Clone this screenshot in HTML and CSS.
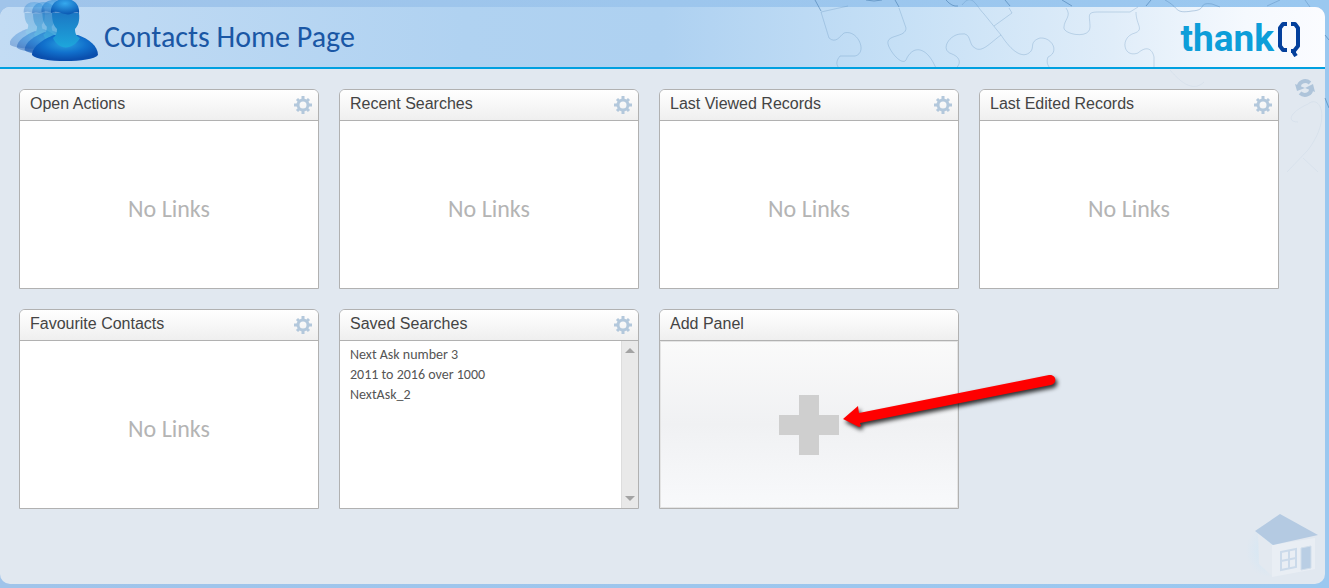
FILE: index.html
```html
<!DOCTYPE html>
<html lang="en">
<head>
<meta charset="utf-8">
<title>Contacts Home Page</title>
<link rel="stylesheet" href="styles.css">
</head>
<body>
<svg width="0" height="0" class="defs" aria-hidden="true">
  <symbol id="gear" viewBox="0 0 18 18">
    <g stroke="#b3c8dc" stroke-width="3">
      <path d="M9 0v4M9 14v4M0 9h4M14 9h4M3 3l3 3M12 12l3 3M15 3l-3 3M6 12l-3 3"/>
    </g>
    <circle cx="9" cy="9" r="5" fill="none" stroke="#b3c8dc" stroke-width="3"/>
  </symbol>
</svg>
<div class="frame">
  <header class="header">
    <svg class="people" width="90" height="62" viewBox="0 0 90 62" aria-hidden="true">
      <defs>
        <radialGradient id="body" cx=".5" cy=".35" r=".6"><stop offset="0" stop-color="#2aa0e0"/><stop offset=".55" stop-color="#1170cc"/><stop offset="1" stop-color="#0a4fae"/></radialGradient>
        <linearGradient id="face" x1="0" y1="0" x2="0" y2="1"><stop offset="0" stop-color="#1b78c4"/><stop offset="1" stop-color="#1da6dc"/></linearGradient>
        <radialGradient id="hair" cx=".5" cy=".3" r=".7"><stop offset="0" stop-color="#35a9ee"/><stop offset="1" stop-color="#0a58b2"/></radialGradient>
        <g id="person">
          <path d="M22 55C22 46 34 39 44 35H68C79 39 88 46 88 55C82 63 29 63 22 55Z" fill="url(#body)"/>
          <path d="M42 13C42 22 44 26 47 29C47 33 46 36 43 38C49 51 63 50 70 38C66 36 65 33 65 29C68 26 70 21 69 13Z" fill="url(#face)"/>
          <path d="M41 13C39 -6 71 -6 69 13C63 11 61 16 55 14C50 13 47 10 41 13Z" fill="url(#hair)"/>
        </g>
      </defs>
      <g opacity=".3"><use href="#person" transform="translate(-17 3) scale(.75)"/></g>
      <g opacity=".4"><use href="#person" transform="translate(-11 3) scale(.81)"/></g>
      <g opacity=".55"><use href="#person" transform="translate(-5 1) scale(.89)"/></g>
      <use href="#person"/>
    </svg>
    <h1 class="title">Contacts Home Page</h1>
    <div class="logo" role="img" aria-label="thankQ">
      <span class="logo-word">thank</span>
      <svg width="24" height="36" viewBox="0 0 24 36" fill="none" stroke="#04409c" stroke-width="4" stroke-linejoin="round">
        <path d="M10 3H6L3 7V25L6 29H10M14 3H18L21 7V25L17 30V32L19 35M14 30H19"/>
      </svg>
    </div>
  </header>
  <main class="content">
    <div class="panels">
      <section class="panel">
        <div class="panel-head"><h2>Open Actions</h2><button class="icon" aria-label="Open Actions settings"><svg width="18" height="18"><use href="#gear"/></svg></button></div>
        <p class="empty">No Links</p>
      </section>
      <section class="panel">
        <div class="panel-head"><h2>Recent Searches</h2><button class="icon" aria-label="Recent Searches settings"><svg width="18" height="18"><use href="#gear"/></svg></button></div>
        <p class="empty">No Links</p>
      </section>
      <section class="panel">
        <div class="panel-head"><h2>Last Viewed Records</h2><button class="icon" aria-label="Last Viewed Records settings"><svg width="18" height="18"><use href="#gear"/></svg></button></div>
        <p class="empty">No Links</p>
      </section>
      <section class="panel">
        <div class="panel-head"><h2>Last Edited Records</h2><button class="icon" aria-label="Last Edited Records settings"><svg width="18" height="18"><use href="#gear"/></svg></button></div>
        <p class="empty">No Links</p>
      </section>
      <section class="panel">
        <div class="panel-head"><h2>Favourite Contacts</h2><button class="icon" aria-label="Favourite Contacts settings"><svg width="18" height="18"><use href="#gear"/></svg></button></div>
        <p class="empty">No Links</p>
      </section>
      <section class="panel">
        <div class="panel-head"><h2>Saved Searches</h2><button class="icon" aria-label="Saved Searches settings"><svg width="18" height="18"><use href="#gear"/></svg></button></div>
        <div class="list-body">
          <ul class="links">
            <li><a href="#">Next Ask number 3</a></li>
            <li><a href="#">2011 to 2016 over 1000</a></li>
            <li><a href="#">NextAsk_2</a></li>
          </ul>
          <div class="track" aria-hidden="true">
            <svg width="10" height="5"><path d="M0 5L5 0L10 5Z" fill="#a3a3a3"/></svg>
            <svg width="10" height="5"><path d="M0 0L5 5L10 0Z" fill="#a3a3a3"/></svg>
          </div>
        </div>
      </section>
      <section class="panel add-panel">
        <div class="panel-head"><h2>Add Panel</h2></div>
        <button class="add" aria-label="Add Panel"><svg width="60" height="60"><path d="M20 0H40V20H60V40H40V60H20V40H0V20H20Z" fill="#cfcfcf"/></svg></button>
        <svg class="arrow" width="230" height="70" viewBox="0 0 230 70" aria-hidden="true">
          <path d="M3 49L18 36L19 43L209 5C216 4 218 13 211 15L20 53L21 56L19 57Z" fill="#f00"/>
        </svg>
      </section>
    </div>
    <button class="icon refresh" aria-label="Refresh">
      <svg width="20" height="18" viewBox="0 0 20 18" fill="none" stroke="#aec4da" stroke-width="4">
        <path d="M4 9C3 3 10 0 15 4M16 9C17 15 10 18 5 14"/>
        <path d="M0 5L2 12L10 9ZM20 13L18 5L10 9Z" fill="#aec4da" stroke="none"/>
      </svg>
    </button>
  </main>
  <svg class="house" width="76" height="70" viewBox="0 0 76 70" aria-hidden="true">
    <defs><radialGradient id="glow"><stop offset="0" stop-color="#d3e7f5"/><stop offset="1" stop-color="#d3e7f5" stop-opacity="0"/></radialGradient></defs>
    <ellipse cx="22" cy="40" rx="22" ry="26" fill="url(#glow)"/>
    <path d="M12 22L26 34V65L13 53Z" fill="#e3e9f0"/>
    <path d="M26 34L69 27V58L26 66Z" fill="#e9eef4"/>
    <path d="M9 20L34 3L72 24L27 34Z" fill="#b4cae2"/>
    <path d="M55 37L65 35V57L55 59Z" fill="#b9cee4" stroke="#d1deeb"/>
    <path d="M35 41L50 38V56L35 59ZM43 39V58M35 50L50 47" fill="none" stroke="#cbdaea" stroke-width="2"/>
  </svg>
</div>
<svg class="puzzle" width="529" height="190" viewBox="0 0 529 190" fill="none" stroke="#4a7fb0" aria-hidden="true">
  <path d="M9 0L15 11M89 0L93 7M60 0Q68 2 76 0M140 0Q146 7 152 6M199 0L204 6M256 0L266 6M340 6L345 0" transform="translate(6 0)" opacity=".6"/>
  <path d="M15 12L42 6M15 12L23 38C30 44 34 36 38 33C52 29 62 53 49 56L34 56C29 62 31 66 33 68M93 8L100 28C100 38 80 34 82 44C84 52 96 66 100 60C106 46 118 46 127 62L130 68M156 5C166 -8 170 6 178 14L195 35C184 43 176 53 169 48C162 45 166 32 155 34C144 34 133 50 146 54C156 58 154 65 150 68M195 35C206 52 216 58 223 53C230 48 222 42 234 38C246 37 254 52 242 57C240 62 242 66 244 68M188 26L206 13L203 8M260 8C266 16 258 20 258 27C256 34 284 40 284 27C284 16 280 12 292 12H324L332 7M330 12C330 26 340 30 326 34C314 40 318 58 332 53C340 46 346 48 348 57L348 68" transform="translate(6 0)" opacity=".25"/>
  <path d="M365 0C380 8 374 14 392 11C408 10 397 2 412 4L420 7M467 6L480 0M505 0L510 7" opacity=".35"/>
  <path d="M370 70C382 84 394 92 404 82M487 172L508 150C532 118 520 94 508 104C490 112 486 122 498 122M503 158L518 172" opacity=".06"/>
  <path d="M525 35L529 40M525 98L529 108" opacity=".6"/>
</svg>
</body>
</html>
```
FILE: styles.css
```css
* { box-sizing: border-box; }

body {
  margin: 0;
  min-height: 100vh;
  padding: 7px 4px 4px 0;
  display: flex;
  background: linear-gradient(90deg, #a0c4ea, #9ac8f0);
  font-family: "Liberation Sans", Arial, sans-serif;
  color: #444;
}

.defs { position: absolute; }

h1, h2, p, ul { margin: 0; padding: 0; font-weight: normal; }

button { border: 0; padding: 0; background: none; cursor: pointer; }

svg { display: block; }

.frame {
  position: relative;
  flex: 1;
  display: flex;
  flex-direction: column;
  border-radius: 10px;
  background: #e1e8f0;
}

.header {
  display: flex;
  align-items: center;
  height: 62px;
  padding: 0 24px 0 104px;
  border-bottom: 2px solid #00a0e0;
  border-radius: 10px 10px 0 0;
  background: linear-gradient(90deg, #c3dcf4 0%, #b0d2f1 35%, #aed1f1 50%, #c6e0f6 68%, #e0edf9 84%, #f5f9fe 94%, #fbfcff 100%);
}

.people {
  position: absolute;
  left: 10px;
  top: -7px;
}

.title {
  flex: 1;
  font: 30px/36px Carlito, Calibri, "Open Sans", sans-serif;
  color: #1a57a5;
}

.logo {
  display: flex;
  align-items: center;
  gap: 3px;
  padding-top: 4px;
}

.logo-word {
  font: bold 37px/40px Roboto, sans-serif;
  color: #0d9ed9;
}

.content {
  flex: 1;
  display: flex;
  align-items: flex-start;
  padding: 20px 10px 20px 19px;
}

.panels {
  flex: 1;
  display: grid;
  grid-template-columns: repeat(auto-fill, 300px);
  gap: 20px;
}

.panel {
  display: flex;
  flex-direction: column;
  min-height: 200px;
  border: 1px solid #b1b1b1;
  border-radius: 6px 6px 0 0;
  background: #fff;
}

.panel-head {
  display: flex;
  align-items: center;
  justify-content: space-between;
  height: 31px;
  padding: 0 6px 0 10px;
  border-bottom: 1px solid #b1b1b1;
  border-radius: 5px 5px 0 0;
  background: linear-gradient(#fff, #efefef);
}

.panel-head h2 {
  font-size: 16px;
  line-height: 20px;
  padding-bottom: 3px;
}

.empty {
  flex: 1;
  display: flex;
  align-items: center;
  justify-content: center;
  padding-top: 8px;
  font: 24px/28px Carlito, Calibri, "Open Sans", sans-serif;
  color: #b4b4b4;
}

.list-body {
  flex: 1;
  display: flex;
}

.links {
  flex: 1;
  padding: 4px 10px;
  list-style: none;
  font: 14px/20px Carlito, Calibri, "Open Sans", sans-serif;
}

.links a { color: #555; text-decoration: none; }

.track {
  display: flex;
  flex-direction: column;
  justify-content: space-between;
  align-items: center;
  width: 17px;
  padding: 7px 0;
  border-left: 1px solid #ddd;
  background: #e9e9e9;
}

.add-panel { position: relative; }

.add {
  flex: 1;
  display: flex;
  align-items: center;
  justify-content: center;
  border: 1px solid #e4e4e4;
  background: linear-gradient(#fafafa, #f0f1f3 50%, #f8f9fb);
}

.arrow {
  position: absolute;
  left: 180px;
  top: 60px;
  z-index: 2;
  filter: drop-shadow(2px 3px 2px rgba(0, 0, 0, .8));
}

.refresh { margin: -10px 0 0 16px; }

.house {
  position: absolute;
  right: 3px;
  bottom: 3px;
}

.puzzle {
  position: absolute;
  right: 0;
  top: 0;
  pointer-events: none;
}
```
